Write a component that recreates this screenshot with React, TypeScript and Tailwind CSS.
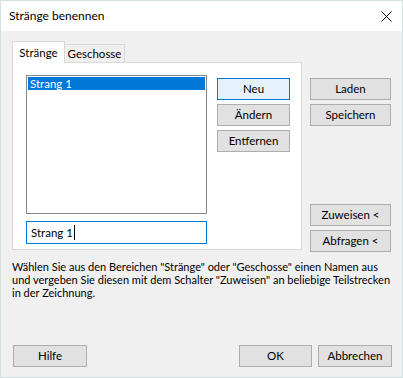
import React from "react";

const font = { fontFamily: 'Lato, "Noto Sans", sans-serif' };

function Btn({ children, w, def }: { children: React.ReactNode; w: string; def?: boolean }) {
  return (
    <div
      className={`${w} h-[22px] flex items-center justify-center border text-[11.5px] leading-none text-black ${
        def ? "border-[#0078d7] bg-[#e5f1fb]" : "border-[#adadad] bg-[#e1e1e1]"
      }`}
    >
      {children}
    </div>
  );
}

export default function App() {
  return (
    <div
      style={font}
      className="w-[403px] h-[378px] border border-[#d3e2de] bg-[#f0f0f0] flex flex-col text-black"
    >
      <div className="h-[30px] bg-white flex items-center justify-between pl-[8px] pr-[9px]">
        <span className="text-[12px]">Stränge benennen</span>
        <svg width="11" height="11" viewBox="0 0 11 11" className="mr-[1px]">
          <path d="M0.5 0.5 L10.5 10.5 M10.5 0.5 L0.5 10.5" stroke="#000" strokeWidth="1" />
        </svg>
      </div>
      <div className="flex-1 flex flex-col pl-[11px] pt-[10px] pb-[10px]">
        <div className="flex">
          <div className="w-[290px] flex flex-col">
            <div className="h-[21px] flex items-end relative">
              <div className="h-[22px] w-[53px] border border-b-0 border-[#d9d9d9] bg-white flex items-center justify-center text-[11.5px] relative z-10 -mb-[1px]">
                Stränge
              </div>
              <div className="h-[18px] w-[60px] border border-l-0 border-b-0 border-[#d9d9d9] bg-[#f0f0f0] flex items-center justify-center text-[11.5px]">
                Geschosse
              </div>
            </div>
            <div className="h-[188px] border border-[#d9d9d9] bg-white pl-[13px] pt-[12px] flex">
              <div className="w-[181px] flex flex-col">
                <div className="h-[139px] border border-[#828790] bg-white p-[1px]">
                  <div className="h-[13px] bg-[#0078d7] text-white text-[11.5px] leading-[13px] pl-[2px]">
                    Strang 1
                  </div>
                </div>
                <div className="mt-[7px] h-[23px] border border-[#0078d7] bg-white flex items-center pl-[4px] text-[11.5px]">
                  <span>Strang 1</span>
                  <span className="inline-block w-[1px] h-[15px] bg-black ml-[1px]" />
                </div>
              </div>
              <div className="ml-[10px] pt-[3px] flex flex-col gap-[4px]">
                <Btn w="w-[73px]" def>
                  Neu
                </Btn>
                <Btn w="w-[73px]">Ändern</Btn>
                <Btn w="w-[73px]">Entfernen</Btn>
              </div>
            </div>
          </div>
          <div className="ml-[8px] pt-[37px] flex flex-col">
            <Btn w="w-[81px]">Laden</Btn>
            <div className="mt-[4px]">
              <Btn w="w-[81px]">Speichern</Btn>
            </div>
            <div className="mt-[78px]">
              <Btn w="w-[81px]">Zuweisen &lt;</Btn>
            </div>
            <div className="mt-[4px]">
              <Btn w="w-[81px]">Abfragen &lt;</Btn>
            </div>
          </div>
        </div>
        <p className="mt-[8px] text-[11px] leading-[13px] whitespace-nowrap">
          Wählen Sie aus den Bereichen "Stränge" oder "Geschosse" einen Namen aus
          <br />
          und vergeben Sie diesen mit dem Schalter "Zuweisen" an beliebige Teilstrecken
          <br />
          in der Zeichnung.
        </p>
        <div className="mt-auto flex items-center">
          <div className="ml-[1px]">
            <Btn w="w-[74px]">Hilfe</Btn>
          </div>
          <div className="ml-auto mr-[10px] flex gap-[6px]">
            <Btn w="w-[73px]">OK</Btn>
            <Btn w="w-[74px]">Abbrechen</Btn>
          </div>
        </div>
      </div>
    </div>
  );
}
